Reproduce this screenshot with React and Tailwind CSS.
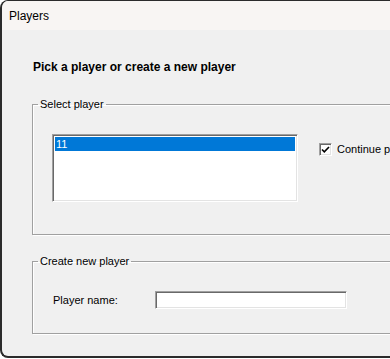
import React from "react";

const sunken =
  "border border-t-[#a0a0a0] border-l-[#a0a0a0] border-r-white border-b-white shadow-[inset_1px_1px_0_#696969,inset_-1px_-1px_0_#e3e3e3]";

const GroupBox = ({ title, children, className = "" }) => (
  <fieldset
    className={`w-[380px] border border-[#a0a0a0] shadow-[inset_1px_1px_0_#fff,1px_1px_0_#fff] ${className}`}
  >
    <legend className="ml-[5px] px-[2px] text-[11px] leading-[13px] text-black">{title}</legend>
    {children}
  </fieldset>
);

export default function App() {
  return (
    <div className="w-[390px] h-[359px] overflow-hidden bg-white font-['Liberation_Sans',Arial,sans-serif]">
      <div className="w-[420px] h-[358px] bg-[#f0f0f0] border-l-2 border-t border-b-2 border-[#2b2b2b] rounded-tl-[8px] rounded-bl-[8px] overflow-hidden flex flex-col">
        {/* Title bar */}
        <div className="h-[29px] shrink-0 bg-[#f8f5f3] flex items-center pl-[7px] pt-[1px]">
          <span className="text-[12px] text-black">Players</span>
        </div>

        <div className="pl-[30px] flex flex-col">
          <h1 className="mt-[30px] ml-[1px] text-[12px] leading-[14px] font-bold text-black">
            Pick a player or create a new player
          </h1>

          {/* Select player */}
          <GroupBox title="Select player" className="mt-[24px] pb-[32px]">
            <div className="flex items-start pt-[23px] pl-[19px]">
              <div className={`w-[246px] h-[68px] bg-white p-[2px] ${sunken}`}>
                <div className="h-[14px] bg-[#0078d7] text-white text-[11px] leading-[14px] pl-[1px]">11</div>
              </div>
              <label className="ml-[21px] mt-[7px] flex items-center gap-[5px] whitespace-nowrap text-[11px] text-black">
                <span className={`w-[13px] h-[13px] bg-white flex items-center justify-center ${sunken}`}>
                  <svg width="9" height="9" viewBox="0 0 9 9">
                    <path d="M1 4.5 L3.3 6.8 L8 2" stroke="#000" strokeWidth="1.6" fill="none" />
                  </svg>
                </span>
                Continue previous game
              </label>
            </div>
          </GroupBox>

          {/* Create new player */}
          <GroupBox title="Create new player" className="mt-[20px] pb-[24px]">
            <div className="flex items-center pt-[23px] pl-[20px]">
              <span className="w-[102px] text-[11px] text-black">Player name:</span>
              <input
                type="text"
                className={`w-[192px] h-[18px] bg-white outline-none ${sunken}`}
              />
            </div>
          </GroupBox>
        </div>
      </div>
    </div>
  );
}
